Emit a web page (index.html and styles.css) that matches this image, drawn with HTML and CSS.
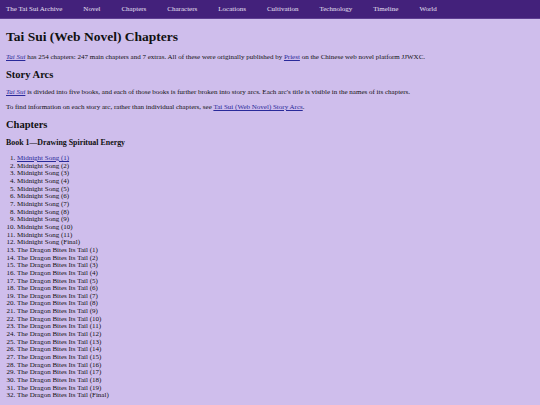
FILE: index.html
```html
<!DOCTYPE html>
<html lang="en">
<head>
<meta charset="utf-8">
<title>Tai Sui (Web Novel) Chapters</title>
<link rel="stylesheet" href="styles.css">
</head>
<body>
<nav class="topnav">
  <a href="#">The Tai Sui Archive</a>
  <a href="#">Novel</a>
  <a href="#">Chapters</a>
  <a href="#">Characters</a>
  <a href="#">Locations</a>
  <a href="#">Cultivation</a>
  <a href="#">Technology</a>
  <a href="#">Timeline</a>
  <a href="#">World</a>
</nav>
<main class="content">
  <h1 class="title">Tai Sui (Web Novel) Chapters</h1>
  <p class="para"><a href="#"><i>Tai Sui</i></a> has 254 chapters: 247 main chapters and 7 extras. All of these were originally published by <a href="#">Priest</a> on the Chinese web novel platform JJWXC.</p>
  <h2 class="section">Story Arcs</h2>
  <p class="para"><a href="#"><i>Tai Sui</i></a> is divided into five books, and each of those books is further broken into story arcs. Each arc's title is visible in the names of its chapters.</p>
  <p class="para">To find information on each story arc, rather than individual chapters, see <a href="#">Tai Sui (Web Novel) Story Arcs</a>.</p>
  <h2 class="section">Chapters</h2>
  <h3 class="book">Book 1—Drawing Spiritual Energy</h3>
  <ol class="chapters">
    <li><a href="#">Midnight Song (1)</a></li>
    <li>Midnight Song (2)</li>
    <li>Midnight Song (3)</li>
    <li>Midnight Song (4)</li>
    <li>Midnight Song (5)</li>
    <li>Midnight Song (6)</li>
    <li>Midnight Song (7)</li>
    <li>Midnight Song (8)</li>
    <li>Midnight Song (9)</li>
    <li>Midnight Song (10)</li>
    <li>Midnight Song (11)</li>
    <li>Midnight Song (Final)</li>
    <li>The Dragon Bites Its Tail (1)</li>
    <li>The Dragon Bites Its Tail (2)</li>
    <li>The Dragon Bites Its Tail (3)</li>
    <li>The Dragon Bites Its Tail (4)</li>
    <li>The Dragon Bites Its Tail (5)</li>
    <li>The Dragon Bites Its Tail (6)</li>
    <li>The Dragon Bites Its Tail (7)</li>
    <li>The Dragon Bites Its Tail (8)</li>
    <li>The Dragon Bites Its Tail (9)</li>
    <li>The Dragon Bites Its Tail (10)</li>
    <li>The Dragon Bites Its Tail (11)</li>
    <li>The Dragon Bites Its Tail (12)</li>
    <li>The Dragon Bites Its Tail (13)</li>
    <li>The Dragon Bites Its Tail (14)</li>
    <li>The Dragon Bites Its Tail (15)</li>
    <li>The Dragon Bites Its Tail (16)</li>
    <li>The Dragon Bites Its Tail (17)</li>
    <li>The Dragon Bites Its Tail (18)</li>
    <li>The Dragon Bites Its Tail (19)</li>
    <li>The Dragon Bites Its Tail (Final)</li>
  </ol>
</main>
</body>
</html>
```

FILE: styles.css
```css
html, body {
  margin: 0;
  padding: 0;
}
body {
  background: #cfbeec;
  color: #111;
  font-family: "Liberation Serif", "Times New Roman", serif;
  font-size: 7px;
}
.topnav {
  display: flex;
  align-items: center;
  height: 18px;
  padding: 0 6px;
  gap: 21px;
  background: #43217b;
  border-bottom: 1px solid #5e3e92;
}
.topnav a {
  color: #e8e0f4;
  text-decoration: none;
  font-size: 7px;
}
.content {
  padding: 0 6px;
}
.title {
  font-size: 13.5px;
  margin: 10px 0 8px;
}
.section {
  font-size: 10.5px;
  margin: 8px 0 8px;
}
.book {
  font-size: 7.9px;
  margin: 8px 0 8px;
}
.para {
  margin: 7px 0;
  line-height: 8px;
}
.para a, .chapters a {
  color: #2a2a9a;
}
.chapters {
  margin: 0;
  padding-left: 11px;
  line-height: 7.65px;
}
```
